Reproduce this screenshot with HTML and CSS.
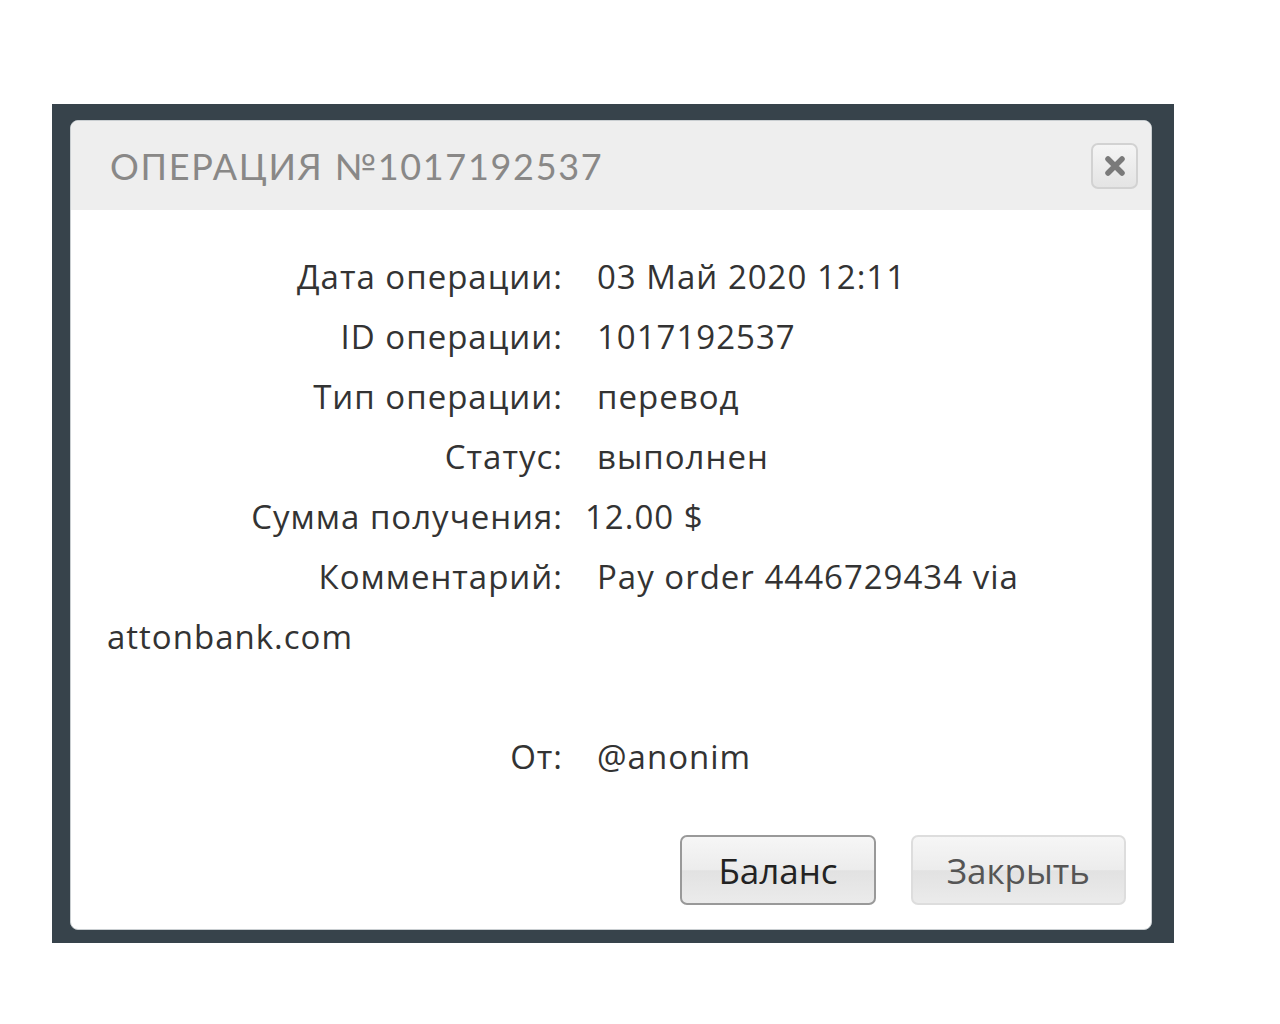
FILE: index.html
```html
<!DOCTYPE html>
<html lang="ru">

<head>
    <meta charset="UTF-8">
    <title>Операция №1017192537</title>
    <link rel="stylesheet" href="styles.css">
</head>

<body>
    <div class="overlay">
        <div class="modal">
            <div class="modal-head">
                <h2 class="modal-title">Операция №1017192537</h2>
                <button class="btn-close" type="button">
                    <svg width="24" height="24" viewBox="0 0 24 24">
                        <path d="M5 5 L19 19 M19 5 L5 19" stroke="#7a7a7a" stroke-width="5.5" stroke-linecap="round" />
                    </svg>
                </button>
            </div>

            <div class="modal-body">
                <div class="row"><span class="lbl">Дата операции:</span><span class="val">03 Май 2020 12:11</span></div>
                <div class="row"><span class="lbl">ID операции:</span><span class="val">1017192537</span></div>
                <div class="row"><span class="lbl">Тип операции:</span><span class="val">перевод</span></div>
                <div class="row"><span class="lbl">Статус:</span><span class="val">выполнен</span></div>
                <div class="row"><span class="lbl">Сумма получения:</span><span class="val val-tight">12.00 $</span></div>
                <div class="row"><span class="lbl">Комментарий:</span><span class="val">Pay order 4446729434 via</span> <span class="val">attonbank.com</span></div>
                <div class="row"><br></div>
                <div class="row"><span class="lbl">От:</span><span class="val">@anonim</span></div>
            </div>

            <div class="modal-foot">
                <button class="btn btn-dark" type="button">Баланс</button>
                <button class="btn" type="button">Закрыть</button>
            </div>
        </div>
    </div>
</body>

</html>
```

FILE: styles.css
```css
* {
    margin: 0;
    padding: 0;
    box-sizing: border-box;
}

body {
    background-color: #fff;
    font-family: "Open Sans", "Liberation Sans", sans-serif;
}

.overlay {
    width: 1122px;
    height: 839px;
    margin: 104px 0 0 52px;
    padding: 16px 22px 0 18px;
    background-color: #37434b;
}

.modal {
    width: 1082px;
    height: 810px;
    background-color: #fff;
    border: 1px solid #c9ced1;
    border-radius: 8px;
    overflow: hidden;
    display: flex;
    flex-direction: column;
}

.modal-head {
    height: 89px;
    background-color: #eee;
    display: flex;
    align-items: center;
    justify-content: space-between;
    padding: 0 13px 0 39px;
}

.modal-title {
    font-family: "Lato", "Open Sans", sans-serif;
    font-weight: 400;
    font-size: 36px;
    letter-spacing: 1.7px;
    text-transform: uppercase;
    color: #898887;
}

.btn-close {
    width: 47px;
    height: 46px;
    border: 2px solid #d2d2d2;
    border-radius: 7px;
    background: linear-gradient(#f5f5f5, #e4e4e4);
    display: flex;
    align-items: center;
    justify-content: center;
}

/* строки операции */
.modal-body {
    flex: 1;
    padding: 37px 36px 0 36px;
    font-size: 33px;
    letter-spacing: 1px;
    line-height: 60px;
    color: #333;
}

.lbl {
    display: inline-block;
    width: 456px;
    text-align: right;
    margin-right: 34px;
}

.val-tight {
    margin-left: -12px;
}

.modal-foot {
    display: flex;
    justify-content: flex-end;
    gap: 35px;
    padding: 0 25px 24px 0;
}

.btn {
    height: 70px;
    padding: 0 34px;
    font-family: "Open Sans", sans-serif;
    font-size: 35px;
    color: #555;
    border: 2px solid #ddd;
    border-radius: 7px;
    background: linear-gradient(#f6f6f6 0%, #ececec 50%, #e2e2e2 51%, #ebebeb 100%);
}

.btn-dark {
    color: #222;
    border-color: #999;
    padding: 0 36px;
}
```
